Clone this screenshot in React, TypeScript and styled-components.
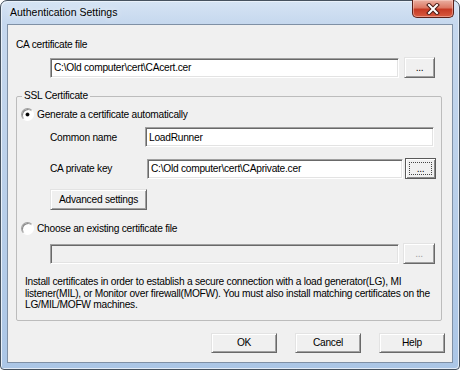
import React from 'react';
import styled, { createGlobalStyle } from 'styled-components';

const GlobalStyle = createGlobalStyle`
  html, body {
    margin: 0;
    padding: 0;
    background: #ffffff;
  }
  body {
    font-family: "Liberation Sans", Arial, sans-serif;
  }
  * {
    box-sizing: border-box;
  }
`;

const Window = styled.div`
  width: 460px;
  height: 370px;
  display: flex;
  flex-direction: column;
  padding: 0 6px 6px 6px;
  border: 1px solid #46525f;
  border-radius: 7px 7px 4px 4px;
  background: linear-gradient(180deg, #d6e4f4 0px, #c6d8ee 22px, #bcd1ea 160px, #abc6e6 370px);
  box-shadow: inset 1px 1px 0 #e9f1fa, inset -1px -1px 0 #e3ecf7;
`;

const TitleBar = styled.div`
  height: 23px;
  display: flex;
  align-items: flex-start;
  justify-content: space-between;
`;

const Title = styled.div`
  margin-left: 3px;
  line-height: 23px;
  font-size: 10.5px;
  color: #000;
  text-shadow: 0 0 6px rgba(255, 255, 255, 0.95);
`;

const CloseButton = styled.div`
  width: 42px;
  height: 18px;
  margin-top: -1px;
  margin-right: -1px;
  display: flex;
  align-items: center;
  justify-content: center;
  border: 1px solid #5b2019;
  border-top: none;
  border-radius: 0 0 5px 5px;
  background: linear-gradient(180deg, #eab0a2 0%, #dc7864 45%, #c63a24 55%, #d85a40 100%);
  box-shadow: inset 0 0 0 1px rgba(255, 220, 210, 0.45);
`;

const Client = styled.div`
  flex: 1;
  display: flex;
  flex-direction: column;
  padding: 13px 8px 0 8px;
  border: 1px solid #7f90a5;
  background: #f0f0f0;
  font-size: 10.2px;
  letter-spacing: -0.25px;
  color: #000;
`;

const Label = styled.div`
  line-height: 14px;
  height: 14px;
  white-space: nowrap;
`;

const Row = styled.div<{ $top: number; $indent: number; $gap?: number }>`
  display: flex;
  align-items: center;
  margin-top: ${(p) => p.$top}px;
  margin-left: ${(p) => p.$indent}px;
  gap: ${(p) => p.$gap ?? 0}px;
`;

const FieldLabel = styled.div`
  width: 95px;
  flex-shrink: 0;
  white-space: nowrap;
`;

const TextField = styled.input<{ $width: number }>`
  width: ${(p) => p.$width}px;
  height: 20px;
  flex-shrink: 0;
  margin: 0;
  padding: 0 0 0 3px;
  border: 1px solid;
  border-color: #a0a0a0 #ffffff #ffffff #a0a0a0;
  box-shadow: inset 1px 1px 0 #696969, inset -1px -1px 0 #e3e3e3;
  background: #ffffff;
  font: inherit;
  letter-spacing: inherit;
  color: #000;
  outline: none;

  &:disabled {
    background: #f0f0f0;
  }
`;

const Button = styled.button<{ $width: number; $height?: number; $focused?: boolean }>`
  width: ${(p) => p.$width}px;
  height: ${(p) => p.$height ?? 21}px;
  flex-shrink: 0;
  margin: 0;
  padding: 0;
  font: inherit;
  letter-spacing: inherit;
  color: #000;
  background: #f0f0f0;
  border: 1px solid;
  border-color: ${(p) => (p.$focused ? '#5a5a5a' : '#e3e3e3 #696969 #696969 #e3e3e3')};
  box-shadow: ${(p) =>
    p.$focused
      ? 'inset 1px 1px 0 #ffffff, inset -1px -1px 0 #8a8a8a'
      : 'inset 1px 1px 0 #ffffff, inset -1px -1px 0 #a0a0a0'};
  outline: ${(p) => (p.$focused ? '1px dotted #444' : 'none')};
  outline-offset: -5px;
  cursor: default;

  &:disabled {
    color: #a0a0a0;
  }
`;

const Group = styled.fieldset`
  margin: 11px 2px 0 0;
  padding: 0 6px 9px 4px;
  border: 1px solid #bcbcbc;
  border-radius: 2px;
  min-width: 0;
`;

const Legend = styled.legend`
  margin-left: 1px;
  padding: 0 2px;
  line-height: 14px;
  height: 14px;
`;

const RadioRow = styled.label<{ $top: number }>`
  display: flex;
  align-items: center;
  height: 14px;
  margin-top: ${(p) => p.$top}px;
  white-space: nowrap;
`;

const RadioMark = styled.span<{ $checked?: boolean }>`
  width: 13px;
  height: 13px;
  margin-right: 3px;
  flex-shrink: 0;
  display: flex;
  align-items: center;
  justify-content: center;
  border-radius: 50%;
  border: 1px solid;
  border-color: #a0a0a0 #ffffff #ffffff #a0a0a0;
  box-shadow: inset 1px 1px 0 #8a8a8a;
  background: #ffffff;

  &::after {
    content: '';
    width: 3px;
    height: 3px;
    border-radius: 50%;
    background: ${(p) => (p.$checked ? '#000' : 'transparent')};
    box-shadow: ${(p) => (p.$checked ? '0 0 0 0.5px #333' : 'none')};
  }
`;

const HelpText = styled.div`
  margin: 12px 0 0 4px;
  line-height: 11.5px;
  white-space: nowrap;
`;

const ButtonBar = styled.div`
  display: flex;
  justify-content: flex-end;
  gap: 18px;
  margin: 12px -1px 0 0;
`;

const CloseGlyph = () => (
  <svg width="14" height="12" viewBox="0 0 14 12">
    <path d="M3 2 L11 10 M11 2 L3 10" stroke="#4a1a14" strokeWidth="4" strokeLinecap="square" />
    <path d="M3 2 L11 10 M11 2 L3 10" stroke="#ffffff" strokeWidth="2" strokeLinecap="square" />
  </svg>
);

const App: React.FC = () => (
  <>
    <GlobalStyle />
    <Window>
      <TitleBar>
        <Title>Authentication Settings</Title>
        <CloseButton>
          <CloseGlyph />
        </CloseButton>
      </TitleBar>
      <Client>
        <Label>CA certificate file</Label>
        <Row $top={5} $indent={34} $gap={5}>
          <TextField $width={349} defaultValue="C:\Old computer\cert\CAcert.cer" />
          <Button $width={31}>...</Button>
        </Row>

        <Group>
          <Legend>SSL Certificate</Legend>
          <RadioRow $top={4}>
            <RadioMark $checked />
            Generate a certificate automatically
          </RadioRow>
          <Row $top={6} $indent={29}>
            <FieldLabel>Common name</FieldLabel>
            <TextField $width={289} defaultValue="LoadRunner" />
          </Row>
          <Row $top={11} $indent={29} $gap={2}>
            <FieldLabel>CA private key</FieldLabel>
            <TextField $width={256} defaultValue="C:\Old computer\cert\CAprivate.cer" />
            <Button $width={31} $focused>
              ...
            </Button>
          </Row>
          <Row $top={10} $indent={29}>
            <Button $width={97}>Advanced settings</Button>
          </Row>
          <RadioRow $top={11}>
            <RadioMark />
            Choose an existing certificate file
          </RadioRow>
          <Row $top={8} $indent={29} $gap={4}>
            <TextField $width={349} disabled />
            <Button $width={32} disabled>
              ...
            </Button>
          </Row>
          <HelpText>
            Install certificates in order to establish a secure connection with a load generator(LG), MI
            <br />
            listener(MIL), or Monitor over firewall(MOFW). You must also install matching certificates on the
            <br />
            LG/MIL/MOFW machines.
          </HelpText>
        </Group>

        <ButtonBar>
          <Button $width={66} $height={20}>OK</Button>
          <Button $width={66} $height={20}>Cancel</Button>
          <Button $width={66} $height={20}>Help</Button>
        </ButtonBar>
      </Client>
    </Window>
  </>
);

export default App;
